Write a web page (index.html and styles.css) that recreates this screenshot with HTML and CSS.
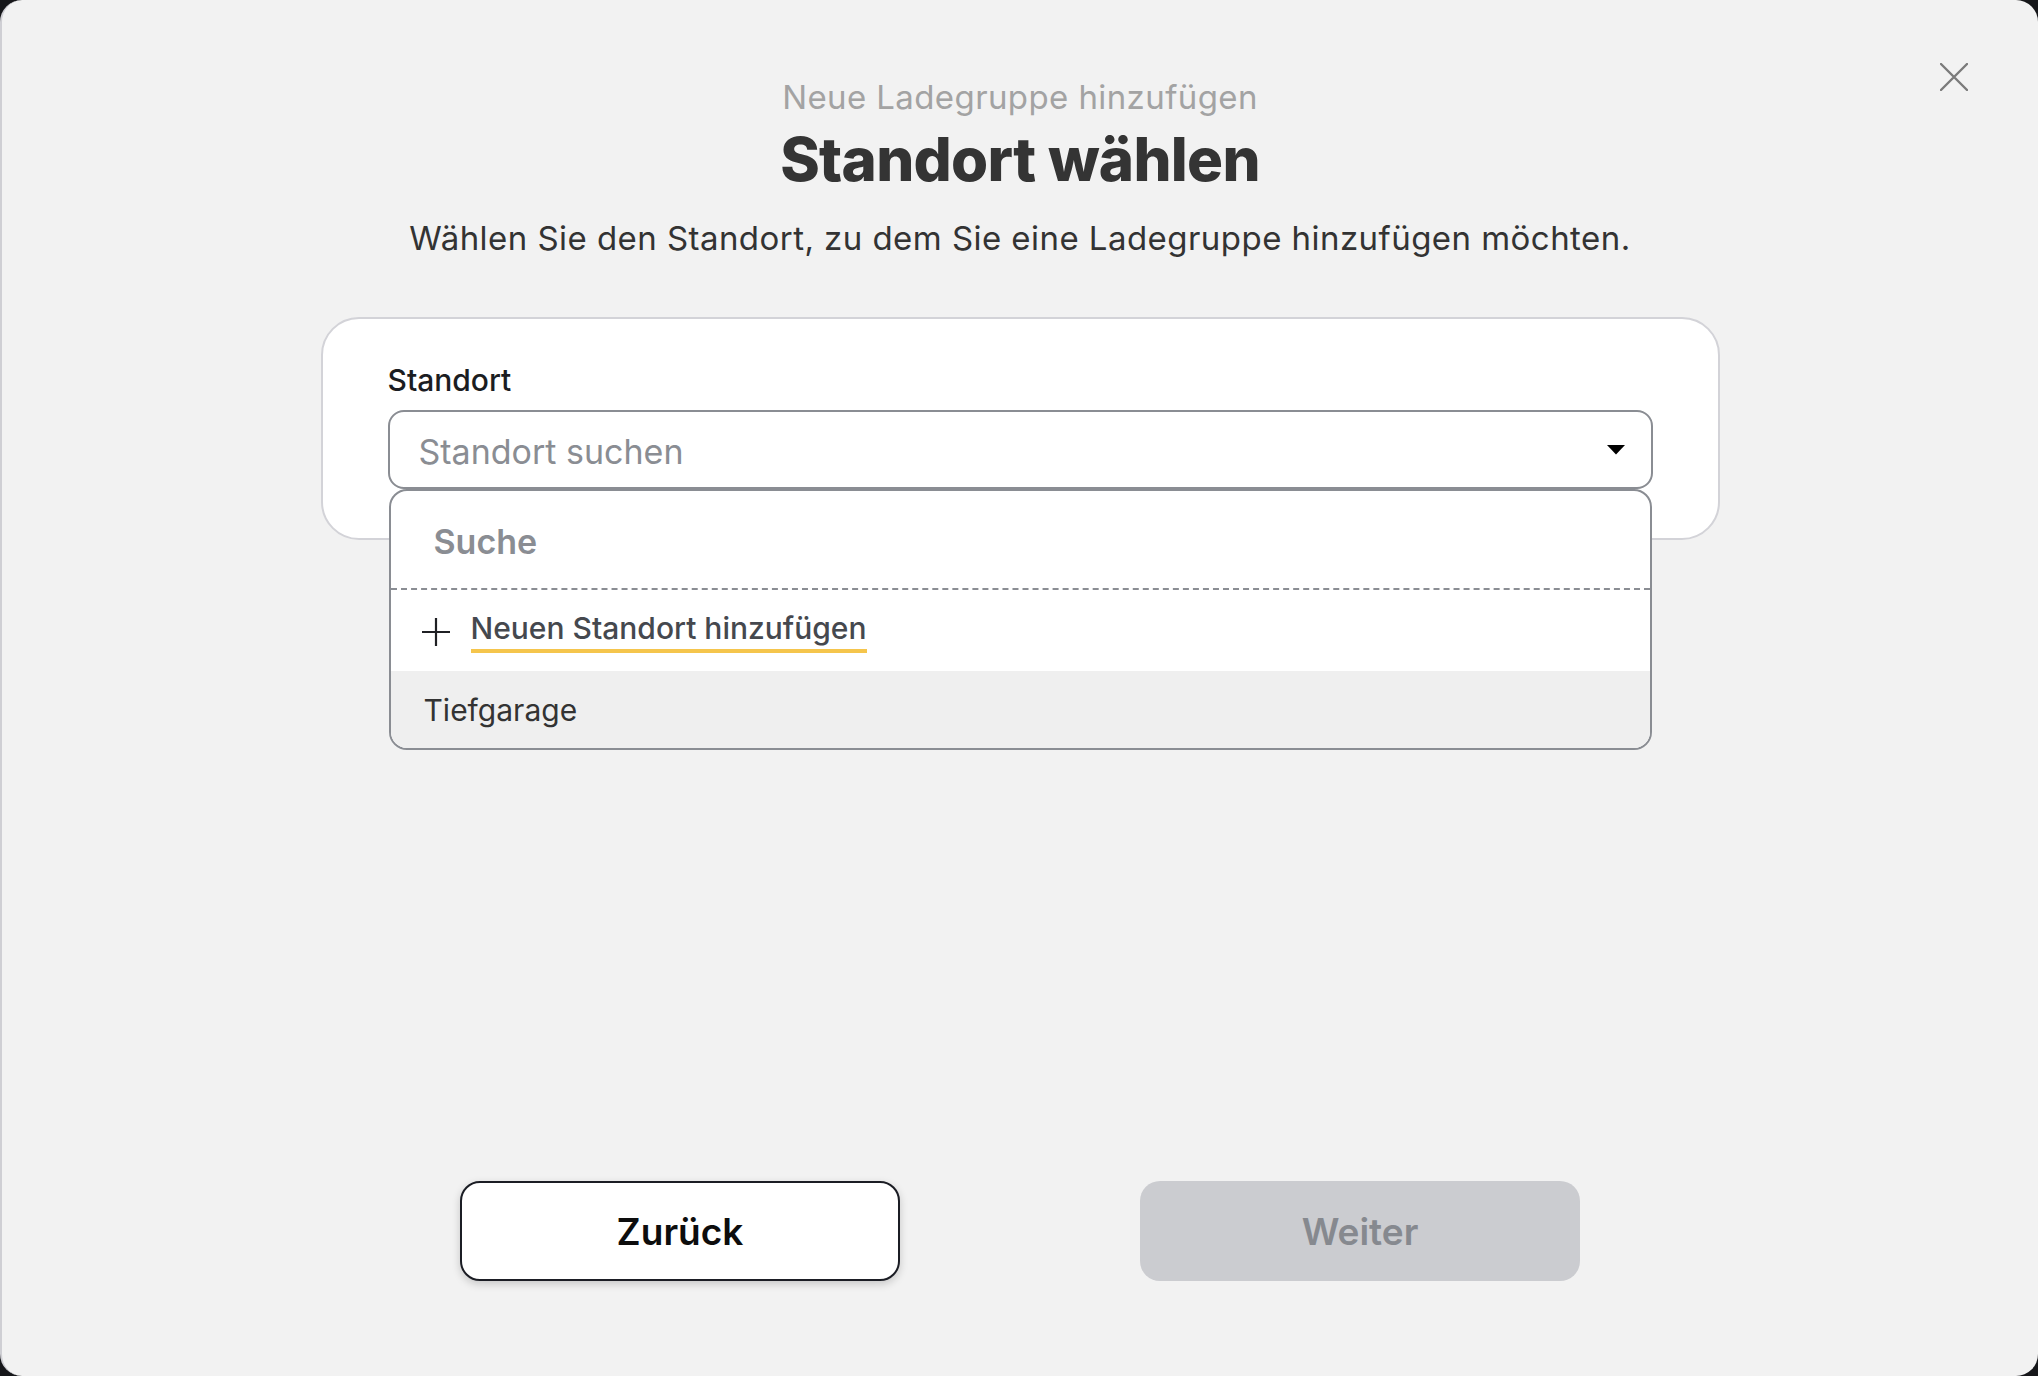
FILE: index.html
```html
<!DOCTYPE html>
<html lang="de">
<head>
<meta charset="utf-8">
<title>Standort wählen</title>
<link rel="stylesheet" href="styles.css">
</head>
<body>
<div class="modal">
  <button class="close" aria-label="Schließen">
    <svg viewBox="0 0 28 28" width="28" height="28"><path d="M1 1 L27 27 M27 1 L1 27" stroke="#7b7b7b" stroke-width="2.4" stroke-linecap="round" fill="none"/></svg>
  </button>
  <header class="head">
    <p class="eyebrow">Neue Ladegruppe hinzufügen</p>
    <h1 class="title">Standort wählen</h1>
    <p class="lead">Wählen Sie den Standort, zu dem Sie eine Ladegruppe hinzufügen möchten.</p>
  </header>
  <section class="card">
    <label class="label">Standort</label>
    <div class="field">
      <div class="select">
        <span class="placeholder">Standort suchen</span>
        <svg class="caret" viewBox="0 0 18 10" width="18" height="10"><path d="M0 0 H18 L9 9.5 Z" fill="#000"/></svg>
      </div>
      <div class="menu">
        <div class="search">Suche</div>
        <div class="add">
          <svg class="plus" viewBox="0 0 30 30" width="30" height="30"><path d="M15 1 V29 M1 15 H29" stroke="#1f2024" stroke-width="2.2" fill="none"/></svg>
          <span class="add-text">Neuen Standort hinzufügen</span>
        </div>
        <div class="option">Tiefgarage</div>
      </div>
    </div>
  </section>
  <footer class="actions">
    <button class="btn btn-back">Zurück</button>
    <button class="btn btn-next" disabled>Weiter</button>
  </footer>
</div>
</body>
</html>
```
FILE: styles.css
```css
* { box-sizing: border-box; }
html, body { margin: 0; padding: 0; }
body {
  background: #16171a;
  font-family: "Inter", "Noto Sans", sans-serif;
  width: 2038px;
  height: 1376px;
  overflow: hidden;
}
.modal {
  position: relative;
  width: 2038px;
  height: 1376px;
  background: #f2f2f2;
  border-radius: 22px;
  border-left: 2px solid #cfcfd4;
  display: flex;
  flex-direction: column;
  align-items: center;
  padding-top: 77px;
  padding-bottom: 95px;
}
.close {
  position: absolute;
  top: 63px;
  right: 70px;
  width: 28px;
  height: 28px;
  padding: 0;
  border: 0;
  background: none;
  display: flex;
}
.head {
  display: flex;
  flex-direction: column;
  align-items: center;
  text-align: center;
}
.eyebrow {
  margin: 0;
  font-size: 33px;
  line-height: 40px;
  color: #a3a3a3;
  font-weight: 400;
  letter-spacing: 0.4px;
}
.title {
  margin: 6px 0 0;
  font-size: 60px;
  line-height: 72px;
  font-weight: 800;
  color: #343434;
  letter-spacing: -0.7px;
}
.lead {
  margin: 23px 0 0;
  font-size: 33px;
  line-height: 40px;
  color: #333;
  font-weight: 400;
  letter-spacing: 0.45px;
}
.card {
  margin-top: 59px;
  width: 1399px;
  background: #fff;
  border: 2px solid #d3d3d8;
  border-radius: 38px;
  padding: 43px 65px 49px;
  display: flex;
  flex-direction: column;
}
.label {
  font-size: 30px;
  line-height: 36px;
  font-weight: 500;
  color: #1b1d22;
}
.field {
  position: relative;
  margin-top: 12px;
}
.select {
  height: 79px;
  border: 2px solid #8a8d93;
  border-radius: 16px;
  background: #fff;
  display: flex;
  align-items: center;
  justify-content: space-between;
  padding: 3px 26px 0 29px;
}
.placeholder {
  font-size: 34px;
  color: #8a8d93;
}
.caret { display: block; margin-top: -3px; }
.menu {
  position: absolute;
  top: 100%;
  left: 1px;
  right: 1px;
  background: #fff;
  border: 2px solid #8a8d93;
  border-radius: 18px;
  overflow: hidden;
  z-index: 2;
}
.search {
  height: 99px;
  display: flex;
  align-items: center;
  padding: 3px 0 0 43px;
  font-size: 34px;
  font-weight: 600;
  color: #8a8d93;
  border-bottom: 2px dashed #8a8d93;
}
.add {
  height: 81px;
  display: flex;
  align-items: center;
  padding-left: 30px;
  gap: 20px;
}
.plus { display: block; flex: none; margin-top: 2px; }
.add-text {
  font-size: 30px;
  font-weight: 500;
  color: #45484e;
  line-height: 36px;
  padding-bottom: 3px;
  border-bottom: 4px solid #f5c54c;
  margin-top: 2px;
}
.option {
  height: 77px;
  background: #efefef;
  display: flex;
  align-items: center;
  padding-left: 33px;
  font-size: 30px;
  color: #333;
}
.actions {
  margin-top: auto;
  display: flex;
  gap: 240px;
}
.btn {
  width: 440px;
  height: 100px;
  border-radius: 20px;
  font-family: "Inter", "Noto Sans", sans-serif;
  font-size: 37px;
  font-weight: 600;
  padding: 0;
}
.btn-back {
  background: #fff;
  border: 2px solid #1b1d24;
  color: #0d0d0d;
  box-shadow: 0 3px 8px rgba(0,0,0,0.18);
}
.btn-next {
  background: #cbccd0;
  border: 0;
  color: #86898f;
}
```
